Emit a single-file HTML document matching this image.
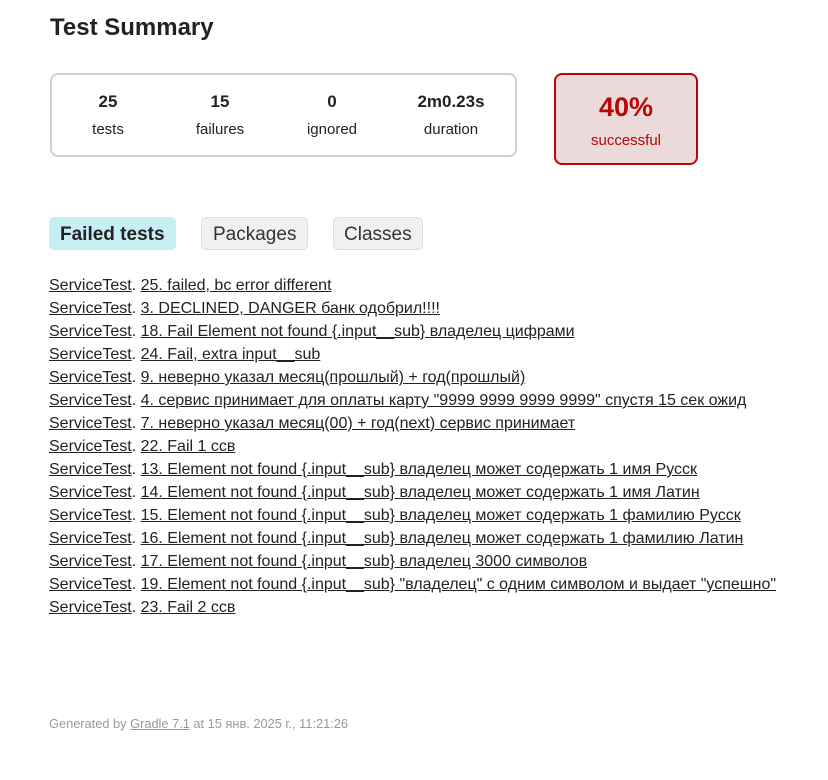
<!DOCTYPE html>
<html><head><meta charset="utf-8"><style>
body{margin:0;font-family:"Liberation Sans","Noto Sans CJK SC",sans-serif;color:#222;background:#fff;}
h1{position:absolute;left:50px;top:14px;margin:0;font-size:24px;font-weight:bold;color:#222;}
.sum{position:absolute;left:50px;top:73px;width:463px;height:80px;border:2px solid #d0d0d0;border-radius:8px;box-sizing:content-box;}
.c{position:absolute;top:15px;text-align:center;width:120px;}
.c .n{font-size:17px;font-weight:bold;line-height:24px;}
.c .l{font-size:15px;line-height:24px;margin-top:4px;}
.pct{position:absolute;left:554px;top:73px;width:140px;height:88px;border:2px solid #b60808;border-radius:8px;background:#ecd9d9;color:#b60808;text-align:center;}
.pct .n{font-size:27px;font-weight:bold;margin-top:16px;line-height:32px;}
.pct .l{font-size:15px;margin-top:9px;}
.tab{position:absolute;top:217px;height:33px;box-sizing:border-box;border-radius:5px;font-size:19px;line-height:33px;padding:0 10px;}
.t1{left:49px;background:#c5eff5;font-weight:bold;border:1px solid #c5eff5;}
.t2{left:201px;background:#f0f0f0;border:1px solid #ddd;color:#333;padding:0 11px;}
.t3{left:333px;background:#f0f0f0;border:1px solid #ddd;color:#333;}
ul{position:absolute;left:49px;top:274px;margin:0;padding:0;list-style:none;font-size:16px;line-height:23px;}
a{color:#222;text-decoration:underline;}
.f{position:absolute;left:49px;top:716px;font-size:12.8px;color:#999;}
.f a{color:#999;}
</style></head><body>
<h1>Test Summary</h1>
<div class="sum">
<div class="c" style="left:-4px"><div class="n">25</div><div class="l">tests</div></div>
<div class="c" style="left:108px"><div class="n">15</div><div class="l">failures</div></div>
<div class="c" style="left:220px"><div class="n">0</div><div class="l">ignored</div></div>
<div class="c" style="left:339px"><div class="n">2m0.23s</div><div class="l">duration</div></div>
</div>
<div class="pct"><div class="n">40%</div><div class="l">successful</div></div>
<div class="tab t1">Failed tests</div>
<div class="tab t2">Packages</div>
<div class="tab t3">Classes</div>
<ul>
<li><a>ServiceTest</a>. <a>25. failed, bc error different</a></li>
<li><a>ServiceTest</a>. <a>3. DECLINED, DANGER банк одобрил!!!!</a></li>
<li><a>ServiceTest</a>. <a>18. Fail Element not found {.input__sub} владелец цифрами</a></li>
<li><a>ServiceTest</a>. <a>24. Fail, extra input__sub</a></li>
<li><a>ServiceTest</a>. <a>9. неверно указал месяц(прошлый) + год(прошлый)</a></li>
<li><a>ServiceTest</a>. <a>4. сервис принимает для оплаты карту "9999 9999 9999 9999" спустя 15 сек ожид</a></li>
<li><a>ServiceTest</a>. <a>7. неверно указал месяц(00) + год(next) сервис принимает</a></li>
<li><a>ServiceTest</a>. <a>22. Fail 1 ccв</a></li>
<li><a>ServiceTest</a>. <a>13. Element not found {.input__sub} владелец может содержать 1 имя Русск</a></li>
<li><a>ServiceTest</a>. <a>14. Element not found {.input__sub} владелец может содержать 1 имя Латин</a></li>
<li><a>ServiceTest</a>. <a>15. Element not found {.input__sub} владелец может содержать 1 фамилию Русск</a></li>
<li><a>ServiceTest</a>. <a>16. Element not found {.input__sub} владелец может содержать 1 фамилию Латин</a></li>
<li><a>ServiceTest</a>. <a>17. Element not found {.input__sub} владелец 3000 символов</a></li>
<li><a>ServiceTest</a>. <a>19. Element not found {.input__sub} "владелец" с одним символом и выдает "успешно"</a></li>
<li><a>ServiceTest</a>. <a>23. Fail 2 ccв</a></li>
</ul>
<div class="f">Generated by <a>Gradle 7.1</a> at 15 янв. 2025 г., 11:21:26</div>
</body></html>
